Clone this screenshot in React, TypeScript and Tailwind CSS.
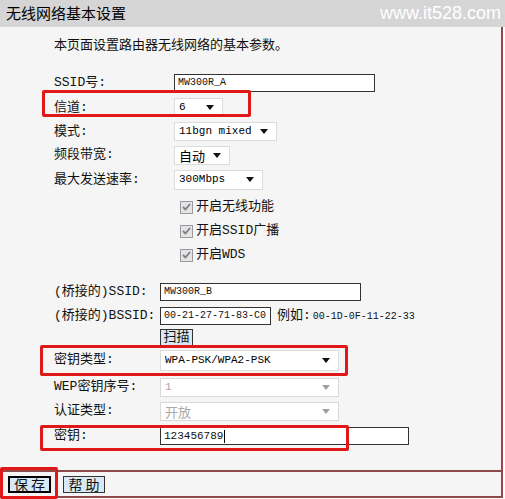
import React from "react";

const FONT = "font-['Liberation_Mono','Noto_Sans_CJK_SC',monospace]";
const CJK = "font-['Noto_Sans_CJK_SC','Liberation_Sans',sans-serif]";

const Arrow: React.FC<{ disabled?: boolean }> = ({ disabled }) => (
  <svg width="8" height="5" viewBox="0 0 8 5" className="shrink-0">
    <path d="M0 0 H8 L4 5 Z" fill={disabled ? "#a0a0a0" : "#111"} />
  </svg>
);

const Select: React.FC<{
  value: string;
  width: string;
  disabled?: boolean;
  mono?: boolean;
  height?: string;
}> = ({ value, width, disabled, mono = true, height = "h-[19px]" }) => (
  <div
    className={[
      "flex items-center justify-between pl-[4px] pr-[8px] border bg-white",
      width,
      height,
      disabled ? "border-[#d8d8d8] text-[#a8a8a8]" : "border-[#dcdcdc] text-black",
      mono ? "text-[11px]" : `text-[13px] ${CJK}`,
    ].join(" ")}
  >
    <span className="leading-none">{value}</span>
    <Arrow disabled={disabled} />
  </div>
);

const Input: React.FC<{ value: string; width: string; small?: boolean; caret?: boolean }> = ({
  value,
  width,
  small,
  caret,
}) => (
  <div
    className={[
      "h-[18px] flex items-center border border-[#333] bg-white pl-[3px]",
      width,
      small ? "text-[10px]" : "text-[11px]",
    ].join(" ")}
  >
    <span className="leading-none">{value}</span>
    {caret && <span className="w-px h-[13px] bg-black ml-px" />}
  </div>
);

const Check: React.FC<{ label: string }> = ({ label }) => (
  <div className="flex items-center h-[24px] pl-[180px]">
    <span className="w-[13px] h-[13px] border border-[#9a9a9a] bg-[#e4e4e4] flex items-center justify-center">
      <svg width="9" height="8" viewBox="0 0 9 8">
        <path d="M1 4 L3.5 6.5 L8 1" stroke="#6f7f8c" strokeWidth="1.8" fill="none" />
      </svg>
    </span>
    <span className="ml-[3px] text-[13px]">{label}</span>
  </div>
);

const Red: React.FC<{ cls: string }> = ({ cls }) => (
  <div className={`absolute border-[3px] border-[#e01818] rounded-[2px] pointer-events-none ${cls}`} />
);

const Row: React.FC<{ label: string; h: string; lw: string; children: React.ReactNode; red?: string }> = ({
  label,
  h,
  lw,
  children,
  red,
}) => (
  <div className={`relative flex items-center pl-[54px] ${h}`}>
    <span className={`shrink-0 text-[13px] ${lw}`}>{label}</span>
    {children}
    {red && <Red cls={red} />}
  </div>
);

const Btn: React.FC<{ label: string; focus?: boolean; cls?: string }> = ({ label, focus, cls }) => (
  <div
    className={[
      "flex items-center justify-center whitespace-nowrap bg-[#d9e8f5] text-[14px] leading-none tracking-[3px] pl-[3px]",
      CJK,
      focus ? "border-2 border-black" : "border border-[#333]",
      cls ?? "",
    ].join(" ")}
  >
    {label}
  </div>
);

export default function App() {
  return (
    <div className={`w-[505px] h-[499px] bg-white overflow-hidden text-[#111] ${FONT}`}>
      <div className="h-[27px] bg-[#d5d5d5] flex items-center justify-between pl-[6px] pr-[4px]">
        <span className={`text-[15px] text-black ${CJK}`}>无线网络基本设置</span>
        <span className="text-[18px] text-white font-['Liberation_Sans',sans-serif]">www.it528.com</span>
      </div>
      <div className="w-[503px] h-[445px] bg-[#f5f5f5] border-r-2 border-b-2 border-[#8e4a4a] pt-[7px]">
        <div className={`h-[20px] pl-[54px] flex items-center text-[13px] ${CJK}`}>
          本页面设置路由器无线网络的基本参数。
        </div>
        <div className="h-[16px]" />
        <Row label="SSID号:" h="h-[25px]" lw="w-[120px]">
          <Input value="MW300R_A" width="w-[201px]" small />
        </Row>
        <Row label="信道:" h="h-[25px]" lw="w-[120px]" red="left-[42px] top-[-5px] w-[209px] h-[27px]">
          <Select value="6" width="w-[49px]" />
        </Row>
        <Row label="模式:" h="h-[23px]" lw="w-[120px]">
          <Select value="11bgn mixed" width="w-[103px]" />
        </Row>
        <Row label="频段带宽:" h="h-[24px]" lw="w-[120px]">
          <Select value="自动" width="w-[56px]" mono={false} />
        </Row>
        <Row label="最大发送速率:" h="h-[25px]" lw="w-[120px]">
          <Select value="300Mbps" width="w-[89px]" height="h-[20px]" />
        </Row>
        <div className="h-[3px]" />
        <Check label="开启无线功能" />
        <Check label="开启SSID广播" />
        <Check label="开启WDS" />
        <div className="h-[13px]" />
        <Row label="(桥接的)SSID:" h="h-[24px]" lw="w-[106px]">
          <Input value="MW300R_B" width="w-[201px]" small />
        </Row>
        <Row label="(桥接的)BSSID:" h="h-[24px]" lw="w-[106px]">
          <Input value="00-21-27-71-83-C0" width="w-[111px]" small />
          <span className="ml-[6px] text-[13px]">例如:</span>
          <span className="ml-[2px] text-[10px]">00-1D-0F-11-22-33</span>
        </Row>
        <div className="h-[20px] flex items-center pl-[160px]">
          <div className="h-[18px] w-[33px] flex items-center justify-center bg-[#d9e8f5] border border-[#333] text-[13px]">
            扫描
          </div>
        </div>
        <Row label="密钥类型:" h="h-[24px]" lw="w-[106px]" red="left-[40px] top-[-3px] w-[308px] h-[31px]">
          <Select value="WPA-PSK/WPA2-PSK" width="w-[179px]" height="h-[21px]" />
        </Row>
        <div className="h-[3px]" />
        <Row label="WEP密钥序号:" h="h-[24px]" lw="w-[106px]">
          <Select value="1" width="w-[179px]" disabled />
        </Row>
        <Row label="认证类型:" h="h-[24px]" lw="w-[106px]">
          <Select value="开放" width="w-[179px]" disabled mono={false} />
        </Row>
        <div className="h-[1px]" />
        <Row label="密钥:" h="h-[24px]" lw="w-[106px]" red="left-[40px] top-[1px] w-[309px] h-[26px]">
          <Input value="123456789" width="w-[249px]" caret />
        </Row>
      </div>
      <div className="relative w-[503px] h-[26px] border-r-2 border-b-2 border-[#8e4a4a] bg-[#f5f5f5] flex items-center gap-[12px] pl-[8px]">
        <Btn label="保存" focus cls="w-[43px] h-[17px]" />
        <Btn label="帮助" cls="w-[42px] h-[17px]" />
        <Red cls="left-0 top-[-5px] w-[58px] h-[32px]" />
      </div>
    </div>
  );
}
